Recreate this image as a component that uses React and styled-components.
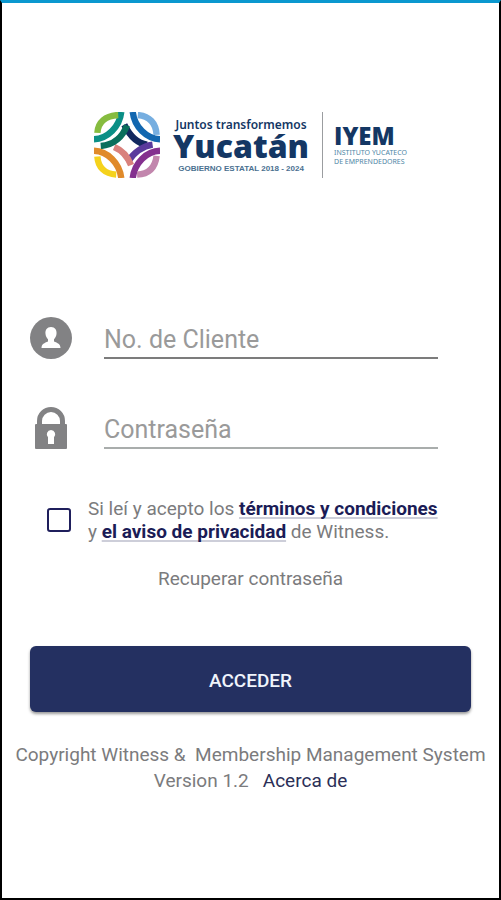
import styled, { createGlobalStyle } from "styled-components"

const App = () => {
  return (
    <>
    <GlobalStyle />
    <Screen>
      <Header>
        <Emblem />
        <Brand>
          <BrandTop>Juntos transformemos</BrandTop>
          <BrandName>Yucatán</BrandName>
          <BrandBottom>GOBIERNO ESTATAL 2018 - 2024</BrandBottom>
        </Brand>
        <Institute>
          <InstituteName>IYEM</InstituteName>
          <InstituteText>INSTITUTO YUCATECO<br />DE EMPRENDEDORES</InstituteText>
        </Institute>
      </Header>
      <Form onSubmit={(e) => e.preventDefault()}>
        <Field>
          <UserIcon />
          <Input type="text" aria-label="No. de Cliente" placeholder="No. de Cliente" $line="#7c7c7c" />
        </Field>
        <Field>
          <LockIcon />
          <Input type="password" aria-label="Contraseña" placeholder="Contraseña" $line="#a9adac" />
        </Field>
        <Terms>
          <Checkbox type="checkbox" id="terms" />
          <TermsLabel htmlFor="terms">
            Si leí y acepto los <TermsLink href="#terminos">términos y condiciones</TermsLink>
            <br />
            y <TermsLink href="#privacidad">el aviso de privacidad</TermsLink> de Witness.
          </TermsLabel>
        </Terms>
        <Recover href="#recuperar">Recuperar contraseña</Recover>
        <Submit type="submit">ACCEDER</Submit>
      </Form>
      <Footer>
        <div>Copyright Witness &amp;&nbsp; Membership Management System</div>
        <Version>
          <span>Version 1.2</span>
          <About href="#acerca">Acerca de</About>
        </Version>
      </Footer>
    </Screen>
    </>
  )
}

const Emblem = () => (
  <svg width="66" height="66" viewBox="32 36 196 196" fill="none" strokeWidth="19" aria-hidden="true">
    <path d="M122 74 C138 106 162 130 190 133" stroke="#12285f" />
    <path d="M206 133 C172 138 150 158 132 184" stroke="#5a3a9c" />
    <path d="M92 140 C116 150 132 168 142 194" stroke="#d9817c" />
    <path d="M52 137 C92 134 118 108 130 76" stroke="#0a6f5c" />
    <path d="M32 117 C72 116 108 80 113 36" stroke="#0b8f86" />
    <path d="M147 36 C152 80 188 116 228 117" stroke="#1267b0" />
    <path d="M228 151 C188 152 152 188 147 232" stroke="#84308f" />
    <path d="M32 151 C72 152 108 188 113 232" stroke="#e08a2a" />
    <path d="M42 98 C44 66 66 47 104 45" stroke="#86bc3f" />
    <path d="M162 45 C196 48 216 68 218 104" stroke="#76aee0" />
    <path d="M218 166 C214 200 196 220 160 222" stroke="#c286ad" />
    <path d="M42 168 C44 200 64 220 98 222" stroke="#f5d21c" />
  </svg>
)

const UserIcon = () => (
  <svg width="42" height="42" viewBox="0 0 42 42" aria-hidden="true">
    <circle cx="21" cy="21" r="21" fill="#828284" />
    <path d="M21 10c-4 0-6 3-5.500 7 .3 2.500 1.300 4 2.500 5.200v2.300c-3.500 1.500-6.500 2.500-6.500 6.500h19c0-4-3-5-6.500-6.500v-2.300c1.200-1.200 2.200-2.700 2.500-5.200.5-4-1.500-7-5.500-7z" fill="#fff" />
  </svg>
)

const LockIcon = () => (
  <svg width="42" height="42" viewBox="0 0 42 42" aria-hidden="true">
    <path d="M9.500 19v-5a11.500 11.500 0 0 1 23 0v5" fill="none" stroke="#828284" strokeWidth="5" />
    <rect x="5" y="17" width="32" height="25" rx="1" fill="#828284" />
    <path d="M21 23a4.300 4.300 0 0 0-3 7.300v6.700h6v-6.700a4.300 4.300 0 0 0-3-7.300z" fill="#fff" />
  </svg>
)

const GlobalStyle = createGlobalStyle`
  * {
    box-sizing: border-box;
  }
  body {
    margin: 0;
    background-color: #FFFFFF;
    font-family: Roboto, "Liberation Sans", sans-serif;
  }
`

const Screen = styled.main`
  display: flex;
  flex-direction: column;
  min-height: 100vh;
  border: 2px solid #000000;
  border-top: 3px solid #0b98cf;
  color: #7b7b7d;
`

const Header = styled.header`
  display: flex;
  justify-content: center;
  align-items: center;
  gap: 13px;
  padding-top: 109px;
  font-family: "Open Sans", "Noto Sans", sans-serif;
  color: #143764;
`

const Brand = styled.div`
  display: flex;
  flex-direction: column;
  align-items: center;
  padding-top: 6px;
  white-space: nowrap;
`

const BrandTop = styled.div`
  font-family: "Noto Sans", sans-serif;
  font-size: 12px;
  line-height: 14px;
  font-weight: 600;
`

const BrandName = styled.div`
  font-size: 32px;
  line-height: 28px;
  font-weight: 800;
`

const BrandBottom = styled.div`
  font-family: "Liberation Sans", sans-serif;
  font-size: 8px;
  line-height: 18px;
  font-weight: 700;
  color: #4a7090;
`

const Institute = styled.div`
  display: flex;
  flex-direction: column;
  justify-content: center;
  height: 66px;
  padding-left: 11px;
  border-left: 1px solid #9b9da0;
  white-space: nowrap;
`

const InstituteName = styled.div`
  font-size: 24px;
  line-height: 24px;
  font-weight: 800;
`

const InstituteText = styled.div`
  font-family: "Noto Sans", sans-serif;
  font-size: 7px;
  line-height: 9px;
  color: #4f86a6;
`

const Form = styled.form`
  display: flex;
  flex-direction: column;
  padding: 139px 28px 0;
`

const Field = styled.div`
  display: flex;
  align-items: center;
  gap: 32px;
  margin-bottom: 48px;
  padding-right: 33px;
`

const Input = styled.input`
  flex: 1;
  min-width: 0;
  height: 42px;
  padding: 4px 0 0;
  border: none;
  border-bottom: 2px solid ${(props) => props.$line};
  background: none;
  font-family: inherit;
  font-size: 25px;
  color: #4a4a4a;
  outline: none;
  &::placeholder {
    color: #9a9a9a;
    opacity: 1;
  }
`

const Terms = styled.div`
  display: flex;
  align-items: center;
  gap: 17px;
  padding-left: 17px;
`

const Checkbox = styled.input`
  appearance: none;
  flex: none;
  width: 24px;
  height: 24px;
  margin: 0;
  border: 2px solid #1f1f5c;
  border-radius: 3px;
  background-color: #FFFFFF;
  &:checked {
    background-color: #1f1f5c;
  }
`

const TermsLabel = styled.label`
  font-size: 19px;
  line-height: 23px;
`

const TermsLink = styled.a`
  color: #1b1c56;
  font-weight: 700;
  text-decoration: underline;
  text-decoration-color: #cdced9;
  text-decoration-thickness: 2px;
  text-decoration-skip-ink: none;
  text-underline-offset: 2px;
`

const Recover = styled.a`
  align-self: center;
  margin-top: 24px;
  font-size: 19px;
  line-height: 23px;
  color: inherit;
  text-decoration: none;
`

const Submit = styled.button`
  height: 66px;
  margin-top: 56px;
  padding-top: 3px;
  border: none;
  border-radius: 6px;
  background-color: #243061;
  box-shadow: 0 2px 3px rgba(0, 0, 0, 0.4);
  color: #f0f4fc;
  font-family: inherit;
  font-size: 19px;
  font-weight: 500;
`

const Footer = styled.footer`
  padding-top: 30px;
  font-size: 19px;
  line-height: 26px;
  text-align: center;
`

const Version = styled.div`
  display: flex;
  justify-content: center;
  gap: 14px;
`

const About = styled.a`
  color: #2b2f57;
  text-decoration: none;
`

export default App
